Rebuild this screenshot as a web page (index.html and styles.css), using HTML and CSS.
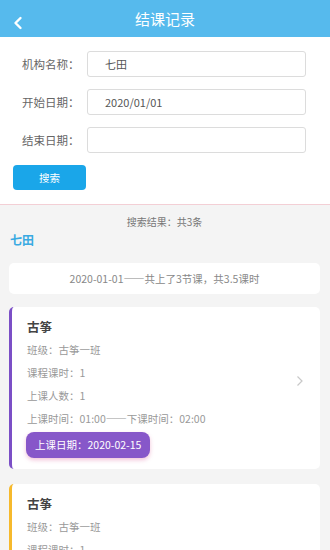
FILE: index.html
```html
<!DOCTYPE html>
<html lang="zh">
<head>
  <meta charset="UTF-8">
  <meta name="viewport" content="width=device-width, initial-scale=1.0">
  <title>结课记录</title>
  <link rel="stylesheet" href="styles.css">
</head>
<body>
  <!-- 顶部导航 -->
  <div class="header">
    <span class="back">
      <svg width="10" height="14" viewBox="0 0 10 14"><path d="M7.5 2 L2.5 7 L7.5 12" fill="none" stroke="#fff" stroke-width="2.4" stroke-linecap="round" stroke-linejoin="round"/></svg>
    </span>
    <h1 class="title">结课记录</h1>
  </div>

  <!-- 搜索表单 -->
  <div class="form">
    <div class="row">
      <label>机构名称：</label>
      <div class="input">七田</div>
    </div>
    <div class="row">
      <label>开始日期：</label>
      <div class="input">2020/01/01</div>
    </div>
    <div class="row">
      <label>结束日期：</label>
      <div class="input"></div>
    </div>
    <button class="search-btn">搜索</button>
  </div>

  <!-- 搜索结果 -->
  <div class="results">
    <p class="count">搜索结果：共3条</p>
    <p class="org">七田</p>
    <div class="summary">2020-01-01——共上了3节课，共3.5课时</div>

    <div class="record purple">
      <div class="record-title">古筝</div>
      <p>班级：古筝一班</p>
      <p>课程课时：1</p>
      <p>上课人数：1</p>
      <p>上课时间：01:00——下课时间：02:00</p>
      <span class="badge">上课日期：2020-02-15</span>
      <svg class="arrow" width="8" height="12" viewBox="0 0 8 12"><path d="M1.5 1.5 L6 6 L1.5 10.5" fill="none" stroke="#c8c8c8" stroke-width="1.2"/></svg>
    </div>

    <div class="record yellow">
      <div class="record-title">古筝</div>
      <p>班级：古筝一班</p>
      <p>课程课时：1</p>
    </div>
  </div>
</body>
</html>
```

FILE: styles.css
```css
* { box-sizing: border-box; }
body {
  margin: 0;
  font-family: "Noto Sans CJK SC", "Noto Sans", sans-serif;
  background: #f4f4f4;
  color: #333;
  overflow: hidden;
}
.header {
  height: 37px;
  background: #56baed;
  display: flex;
  align-items: center;
  justify-content: center;
  position: relative;
}
.back {
  position: absolute;
  left: 13px;
  top: 11px;
}
.title {
  margin: 0;
  font-size: 15px;
  font-weight: 400;
  color: #fff;
}
.form {
  background: #fff;
  padding: 14px 24px 14px 13px;
  border-bottom: 1px solid #f3cfd5;
}
.row {
  display: flex;
  align-items: center;
  margin-bottom: 12px;
  padding-left: 9px;
}
.row label {
  width: 65px;
  font-size: 11.5px;
  color: #666;
}
.input {
  flex: 1;
  height: 26px;
  border: 1px solid #dcdcdc;
  border-radius: 3px;
  padding-left: 17px;
  font-size: 11px;
  line-height: 24px;
  color: #555;
}
.search-btn {
  display: block;
  width: 73px;
  height: 25px;
  margin-top: 4px;
  border: none;
  border-radius: 4px;
  background: #1aa6e9;
  color: #fff;
  font-family: inherit;
  font-size: 10.5px;
}
.results {
  padding: 8px 10px 0 9px;
}
.count {
  margin: 0;
  text-align: center;
  font-size: 10px;
  color: #777;
  line-height: 18px;
}
.org {
  margin: 0 0 0 1px;
  font-size: 12px;
  font-weight: 700;
  color: #3aaae2;
  line-height: 18px;
}
.summary {
  margin-top: 14px;
  height: 31px;
  background: #fff;
  border-radius: 5px;
  text-align: center;
  line-height: 31px;
  font-size: 10.5px;
  color: #888;
}
.record {
  position: relative;
  margin-top: 13px;
  background: #fff;
  border-radius: 5px;
  padding: 9px 0 11px 15px;
  border-left: 3px solid #7b4fc6;
}
.record.yellow {
  margin-top: 15px;
  border-left-color: #f6b92c;
}
.record-title {
  font-size: 12.5px;
  font-weight: 700;
  color: #444;
  line-height: 22px;
}
.record p {
  margin: 0;
  font-size: 10.5px;
  color: #999;
  line-height: 23px;
}
.badge {
  display: inline-block;
  margin-top: 2px;
  margin-left: -1px;
  padding: 0 9px;
  height: 26px;
  line-height: 26px;
  border-radius: 8px;
  background: #8757c9;
  color: #fff;
  font-size: 10.5px;
  box-shadow: 0 2px 4px rgba(226, 120, 170, 0.45);
}
.arrow {
  position: absolute;
  right: 16px;
  top: 68px;
}
```
